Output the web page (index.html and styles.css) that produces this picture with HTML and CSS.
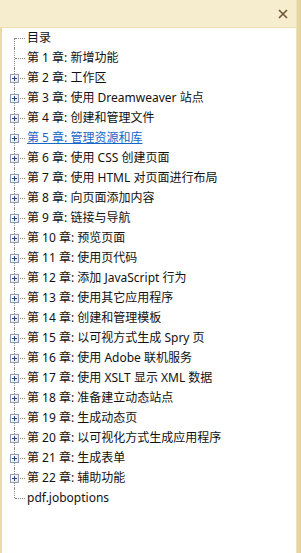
FILE: index.html
```html
<!DOCTYPE html>
<html lang="zh-CN">
<head>
  <meta charset="UTF-8">
  <meta name="viewport" content="width=device-width, initial-scale=1.0">
  <title>目录</title>
  <link rel="stylesheet" href="styles.css">
</head>
<body>
  <div class="window">
    <div class="main">
      <div class="header">
        <button class="close" type="button" title="关闭">
          <svg width="10" height="10" viewBox="0 0 10 10">
            <path d="M1 1 L9 9 M9 1 L1 9" stroke="#6e5535" stroke-width="1.6" fill="none"/>
          </svg>
        </button>
      </div>
      <ul class="tree">
        <li class="node first"><span class="branch"></span><span class="label">目录</span></li>
        <li class="node"><span class="branch"></span><span class="label">第 1 章: 新增功能</span></li>
        <li class="node"><span class="branch"><i class="expander"></i></span><span class="label">第 2 章: 工作区</span></li>
        <li class="node"><span class="branch"><i class="expander"></i></span><span class="label">第 3 章: 使用 Dreamweaver 站点</span></li>
        <li class="node"><span class="branch"><i class="expander"></i></span><span class="label">第 4 章: 创建和管理文件</span></li>
        <li class="node"><span class="branch"><i class="expander"></i></span><a class="label link" href="#">第 5 章: 管理资源和库</a></li>
        <li class="node"><span class="branch"><i class="expander"></i></span><span class="label">第 6 章: 使用 CSS 创建页面</span></li>
        <li class="node"><span class="branch"><i class="expander"></i></span><span class="label">第 7 章: 使用 HTML 对页面进行布局</span></li>
        <li class="node"><span class="branch"><i class="expander"></i></span><span class="label">第 8 章: 向页面添加内容</span></li>
        <li class="node"><span class="branch"><i class="expander"></i></span><span class="label">第 9 章: 链接与导航</span></li>
        <li class="node"><span class="branch"><i class="expander"></i></span><span class="label">第 10 章: 预览页面</span></li>
        <li class="node"><span class="branch"><i class="expander"></i></span><span class="label">第 11 章: 使用页代码</span></li>
        <li class="node"><span class="branch"><i class="expander"></i></span><span class="label">第 12 章: 添加 JavaScript 行为</span></li>
        <li class="node"><span class="branch"><i class="expander"></i></span><span class="label">第 13 章: 使用其它应用程序</span></li>
        <li class="node"><span class="branch"><i class="expander"></i></span><span class="label">第 14 章: 创建和管理模板</span></li>
        <li class="node"><span class="branch"><i class="expander"></i></span><span class="label">第 15 章: 以可视方式生成 Spry 页</span></li>
        <li class="node"><span class="branch"><i class="expander"></i></span><span class="label">第 16 章: 使用 Adobe 联机服务</span></li>
        <li class="node"><span class="branch"><i class="expander"></i></span><span class="label">第 17 章: 使用 XSLT 显示 XML 数据</span></li>
        <li class="node"><span class="branch"><i class="expander"></i></span><span class="label">第 18 章: 准备建立动态站点</span></li>
        <li class="node"><span class="branch"><i class="expander"></i></span><span class="label">第 19 章: 生成动态页</span></li>
        <li class="node"><span class="branch"><i class="expander"></i></span><span class="label">第 20 章: 以可视化方式生成应用程序</span></li>
        <li class="node"><span class="branch"><i class="expander"></i></span><span class="label">第 21 章: 生成表单</span></li>
        <li class="node"><span class="branch"><i class="expander"></i></span><span class="label">第 22 章: 辅助功能</span></li>
        <li class="node last"><span class="branch"></span><span class="label">pdf.joboptions</span></li>
      </ul>
    </div>
    <div class="edge"></div>
  </div>
</body>
</html>
```

FILE: styles.css
```css
body {
  margin: 0;
  padding: 0;
  background: #fff;
  font-family: "Noto Sans", "Noto Sans CJK SC", sans-serif;
  font-size: 12px;
  color: #111;
}
.window {
  display: flex;
  width: 301px;
  height: 553px;
}
.main {
  flex: 1;
  display: flex;
  flex-direction: column;
}
.edge {
  width: 4px;
  background: #e6d4a1;
  border-left: 1px solid #efe2bd;
}
.header {
  height: 27px;
  background: #f6ecce;
  border-bottom: 1px solid #ecdfb6;
  display: flex;
  justify-content: flex-end;
  align-items: center;
}
.close {
  border: 0;
  background: none;
  padding: 0;
  margin-right: 7px;
  width: 12px;
  height: 12px;
  display: flex;
  align-items: center;
  justify-content: center;
}
.tree {
  flex: 1;
  list-style: none;
  margin: 0;
  padding: 0;
  border-left: 2px solid #ead9a9;
}
.node {
  height: 20px;
  display: flex;
  align-items: center;
}
.branch {
  position: relative;
  width: 25px;
  height: 20px;
  flex: none;
}
.branch::before {
  content: "";
  position: absolute;
  left: 12px;
  top: 0;
  bottom: 0;
  border-left: 1px dotted #8a8a8a;
}
.first .branch::before {
  top: 10px;
}
.last .branch::before {
  bottom: 10px;
}
.branch::after {
  content: "";
  position: absolute;
  left: 13px;
  top: 10px;
  width: 10px;
  border-top: 1px dotted #8a8a8a;
}
.expander {
  position: absolute;
  left: 8px;
  top: 6px;
  width: 7px;
  height: 7px;
  border: 1px solid #8d9cb4;
  background: linear-gradient(135deg, #fff 0%, #e6e6e6 100%);
  z-index: 1;
}
.expander::before,
.expander::after {
  content: "";
  position: absolute;
  background: #23437a;
}
.expander::before {
  left: 1px;
  top: 3px;
  width: 5px;
  height: 1px;
}
.expander::after {
  left: 3px;
  top: 1px;
  width: 1px;
  height: 5px;
}
.label {
  white-space: nowrap;
  line-height: 20px;
}
.link {
  color: #1767c8;
  text-decoration: underline;
}
```
